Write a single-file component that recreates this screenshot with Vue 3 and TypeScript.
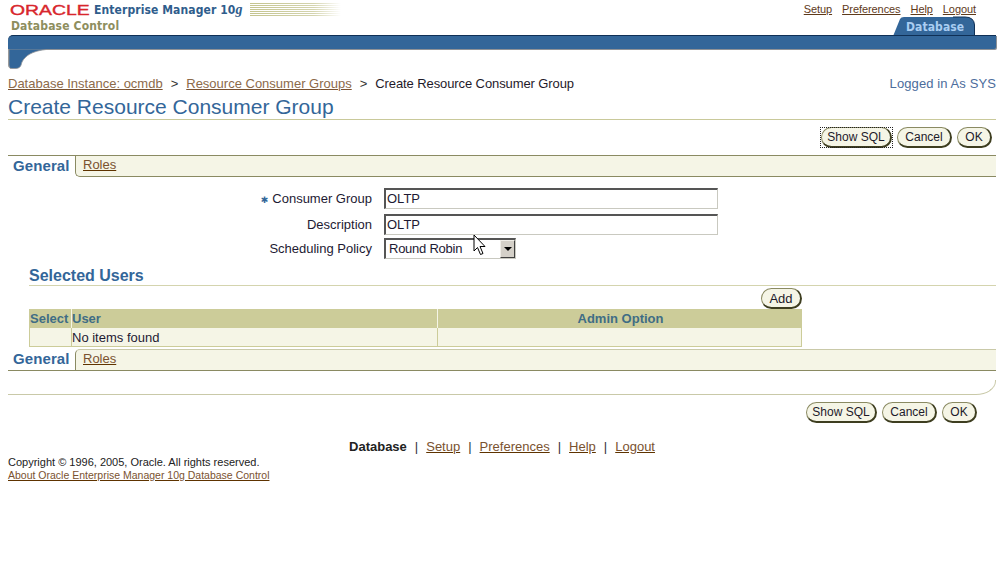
<script setup lang="ts">
const links: string[] = ['Setup', 'Preferences', 'Help', 'Logout']
const stripes: number[] = [0, 2, 4, 6, 8, 10, 12]
</script>

<template>
  <div class="page">
    <header class="top">
      <div class="brand">
        <div class="brand-line">
          <span class="oracle">ORACLE</span>
          <span class="em">Enterprise Manager 10<i>g</i></span>
          <svg class="stripes" width="91" height="14" viewBox="0 0 91 14">
            <defs>
              <linearGradient id="fade" x1="0" x2="1" y1="0" y2="0">
                <stop offset="0" stop-color="#c4c48e" />
                <stop offset="0.7" stop-color="#d4d4ae" />
                <stop offset="1" stop-color="#ffffff" />
              </linearGradient>
            </defs>
            <rect v-for="s in stripes" :key="s" x="0" :y="s" width="91" height="1" fill="url(#fade)" />
          </svg>
        </div>
        <div class="dbc">Database Control</div>
      </div>
      <div class="top-right">
        <nav class="global">
          <a v-for="l in links" :key="l" class="glink">{{ l }}</a>
        </nav>
        <div class="tab">
          <svg class="tab-bg" width="83" height="19" viewBox="0 0 83 19">
            <path d="M0.5 19 L7 3 Q8 1 11 1 L72 1 Q81 1 81.5 9 L81.5 19 Z" fill="#336699" />
            <path d="M81.5 19 L81.5 9 Q81 1 72 1 L60 1" fill="none" stroke="#0f3056" stroke-width="1" />
          </svg>
          <span class="tab-text">Database</span>
        </div>
      </div>
    </header>

    <div class="band"></div>
    <svg class="band-curve" width="60" height="20" viewBox="0 0 60 20">
      <path d="M1 0 H38 V0.5 C24 2 17 7 14 13 C13 16 13 19 8 19.5 L4 19.5 C1.5 19.5 1 18 1 16 Z" fill="#336699" stroke="#8f9296" stroke-width="0.8" />
      <path d="M0.5 0 V16 C0.5 18 2 20 4 20" fill="none" stroke="#9a9a9a" />
    </svg>

    <div class="crumb-row">
      <div class="crumbs">
        <a class="crumb-link">Database Instance: ocmdb</a>
        <span class="sep">&gt;</span>
        <a class="crumb-link">Resource Consumer Groups</a>
        <span class="sep">&gt;</span>
        <span class="crumb-current">Create Resource Consumer Group</span>
      </div>
      <div class="logged">Logged in As SYS</div>
    </div>

    <h1 class="title">Create Resource Consumer Group</h1>

    <div class="actions actions-top">
      <button class="btn b-sql focused">Show SQL</button>
      <button class="btn b-cancel">Cancel</button>
      <button class="btn b-ok">OK</button>
    </div>

    <div class="subtabs first">
      <span class="st-active">General</span>
      <div class="st-rest st-rest-top"><a class="st-link">Roles</a></div>
    </div>

    <form class="form" @submit.prevent>
      <label class="lab"><span class="req">✱</span>Consumer Group</label>
      <div class="field">OLTP</div>
      <label class="lab">Description</label>
      <div class="field">OLTP</div>
      <label class="lab lab-last">Scheduling Policy</label>
      <div class="select">
        <span class="sel-text">Round Robin</span>
        <span class="sel-btn"><span class="arrow"></span></span>
      </div>
      <svg class="cursor" width="14" height="22" viewBox="0 0 14 22">
        <path d="M1 1 V17 L4.5 13.5 L7.5 20.5 L10 19.5 L7 12.5 L12 12.5 Z" fill="#fff" stroke="#000" stroke-width="1" />
      </svg>
    </form>

    <section class="users">
      <h2 class="sec-title">Selected Users</h2>
      <div class="add-row"><button class="btn b-add">Add</button></div>
      <div class="table">
        <div class="th th1">Select</div>
        <div class="th th2">User</div>
        <div class="th th3">Admin Option</div>
        <div class="td td1"></div>
        <div class="td td2">No items found</div>
        <div class="td td3"></div>
      </div>
    </section>

    <div class="subtabs second">
      <span class="st-active">General</span>
      <div class="st-rest st-rest-bottom"><a class="st-link">Roles</a></div>
    </div>

    <div class="closing"></div>

    <div class="actions actions-bottom">
      <button class="btn b-sql">Show SQL</button>
      <button class="btn b-cancel">Cancel</button>
      <button class="btn b-ok">OK</button>
    </div>

    <footer>
      <div class="foot-links">
        <b>Database</b>
        <span class="bar">|</span><a>Setup</a>
        <span class="bar">|</span><a>Preferences</a>
        <span class="bar">|</span><a>Help</a>
        <span class="bar">|</span><a>Logout</a>
      </div>
      <div class="copy">Copyright © 1996, 2005, Oracle. All rights reserved.</div>
      <a class="about">About Oracle Enterprise Manager 10g Database Control</a>
    </footer>
  </div>
</template>

<style>
html, body { margin: 0; background: #fff; }
</style>

<style scoped>
.page {
  width: 988px;
  height: 572px;
  padding: 0 9px 0 8px;
  overflow: hidden;
  position: relative;
  font-family: "Liberation Sans", Arial, sans-serif;
  font-size: 13px;
  color: #1d1a33;
}
a { text-decoration: underline; cursor: pointer; }

.top { display: flex; justify-content: space-between; height: 35px; }
.brand { padding: 2px 0 0 2px; }
.brand-line { display: flex; align-items: center; height: 15px; }
.oracle {
  font-size: 15px;
  font-weight: 400;
  color: #d8262c;
  width: 80px;
  transform: scaleX(1.29);
  transform-origin: left center;
  -webkit-text-stroke: 0.4px #d8262c;
}
.em {
  margin-left: 4px;
  font-family: "DejaVu Sans", sans-serif;
  font-stretch: condensed;
  font-size: 12px;
  font-weight: 700;
  color: #2f5d8c;
  letter-spacing: 0.1px;
  white-space: nowrap;
  width: 150px;
}
.em i { font-family: "Liberation Serif", serif; font-size: 14px; }
.stripes { margin-left: 6px; }
.dbc {
  margin: 2px 0 0 1px;
  font-family: "DejaVu Sans", sans-serif;
  font-stretch: condensed;
  font-size: 12px;
  letter-spacing: 0.15px;
  font-weight: 700;
  color: #8e8e5e;
}
.top-right { display: flex; flex-direction: column; align-items: flex-end; padding-right: 20px; }
.global { display: flex; gap: 10px; height: 17px; padding: 3px 0 0; box-sizing: border-box; font-size: 11px; line-height: 12px; letter-spacing: -0.08px; }
.glink { color: #5e3a1a; }
.tab { position: relative; width: 83px; height: 18px; }
.tab-bg { position: absolute; left: 0; top: -1px; }
.tab-text {
  position: relative;
  display: block;
  padding: 3px 0 0 13px;
  font-family: "DejaVu Sans", sans-serif;
  font-stretch: condensed;
  font-weight: 700;
  font-size: 12px;
  letter-spacing: 0.1px;
  color: #a9cdf2;
}

.band {
  height: 13px;
  background: #336699;
  border-top: 1px solid #0f3056;
  border-radius: 5px 0 2px 0;
  box-shadow: 1px 1px 0 #8f9296;
}
.band-curve { display: block; }

.crumb-row {
  display: flex;
  justify-content: space-between;
  height: 18px;
  margin-top: 6px;
  line-height: 18px;
}
.crumbs { display: flex; gap: 8px; }
.crumb-link { color: #8c6a4a; text-decoration-color: #7a5230; }
.crumb-current { color: #1f1a2a; letter-spacing: -0.1px; }
.sep { color: #333; }
.logged { color: #4c6d9c; letter-spacing: 0.1px; }

.title {
  margin: 3px 0 0;
  font-weight: 400;
  font-size: 21px;
  line-height: 22px;
  color: #336699;
  border-bottom: 1px solid #c9c99a;
  height: 22px;
  padding-bottom: 1px;
}

.actions { display: flex; justify-content: flex-end; gap: 5px; }
.actions-top { margin-top: 7px; padding-right: 4px; }
.btn {
  position: relative;
  height: 21px;
  box-sizing: border-box;
  padding: 0;
  border: 1px solid #8a8a62;
  border-right: 2px solid #3e3e20;
  border-bottom: 2px solid #3e3e20;
  border-radius: 11px;
  background: #f5f5e6;
  font-family: "Liberation Sans", Arial, sans-serif;
  font-size: 12px;
  color: #1d1a2a;
  line-height: 17px;
}
.b-sql { width: 71px; }
.b-cancel { width: 55px; }
.b-ok { width: 35px; }
.b-add { width: 41px; font-size: 13px; }
.focused::after {
  content: "";
  position: absolute;
  inset: -1px -3px -2px -2px;
  border: 1px dotted #222;
}

.subtabs { display: flex; }
.first { margin-top: 7px; }
.st-active {
  width: 67px;
  box-sizing: border-box;
  padding-left: 5px;
  font-size: 15px;
  letter-spacing: 0.1px;
  font-weight: 700;
  color: #336699;
  border-top: 1px solid #8a8a62;
  line-height: 20px;
}
.st-rest { flex: 1; background: #f5f5e6; padding-left: 7px; box-sizing: border-box; height: 22px; line-height: 18px; }
.st-rest-top { border-top: 1px solid #8a8a62; border-bottom: 1px solid #8a8a62; border-left: 1px solid #8a8a62; border-bottom-left-radius: 5px; }
.st-rest-bottom { border-top: 1px solid #c9c9a8; border-bottom: 1px solid #8a8a62; border-left: 1px solid #8a8a62; border-top-left-radius: 5px; }
.st-link { color: #7a5230; text-decoration-color: #5e3300; }
.second .st-active { border-top: none; border-bottom: 1px solid #8a8a62; }

.form {
  position: relative;
  display: grid;
  grid-template-columns: 364px 334px;
  grid-template-rows: 21px 21px 21px;
  column-gap: 12px;
  row-gap: 5px;
  margin-top: 11px;
  align-items: center;
}
.lab-last { margin-top: -5px; }
.lab { text-align: right; }
.req { color: #336699; font-size: 9px; margin-right: 4px; font-family: "DejaVu Sans", sans-serif; }
.field {
  height: 21px;
  box-sizing: border-box;
  border: 2px solid #c9c9c0;
  border-top-color: #555;
  border-left-color: #555;
  border-right-width: 1px;
  border-bottom-width: 1px;
  padding-left: 1px;
  line-height: 18px;
  background: #fff;
}
.select {
  display: flex;
  justify-content: space-between;
  width: 132px;
  height: 21px;
  box-sizing: border-box;
  border: 2px solid #555;
  border-right: 1px solid #c9c9c0;
  border-bottom: 1px solid #c9c9c0;
  margin-top: -5px;
  line-height: 18px;
}
.sel-text { padding-left: 3px; letter-spacing: -0.25px; }
.sel-btn {
  width: 15px;
  display: flex;
  align-items: center;
  justify-content: center;
  box-sizing: border-box;
  background: #d4d0c8;
  border: 1px solid;
  border-color: #f0eee8 #404040 #404040 #f0eee8;
}
.arrow {
  width: 0;
  height: 0;
  border-left: 4px solid transparent;
  border-right: 4px solid transparent;
  border-top: 4px solid #000;
}
.cursor { position: absolute; left: 465px; top: 46px; }

.users { padding-left: 21px; margin-top: 5px; }
.sec-title {
  margin: 0;
  font-size: 16px;
  line-height: 19px;
  font-weight: 700;
  color: #336699;
  border-bottom: 1px solid #d4d4ae;
  height: 20px;
  box-sizing: border-box;
}
.add-row { width: 773px; height: 21px; display: flex; justify-content: flex-end; margin-top: 2px; }
.table {
  width: 773px;
  display: grid;
  grid-template-columns: 42px 366px 365px;
  grid-template-rows: 19px 19px;
  line-height: 19px;
}
.th { background: #cccc99; font-weight: 700; color: #3f6d85; padding-left: 1px; box-sizing: border-box; }
.th2 { border-left: 1px solid #f5f5e6; padding-left: 0; }
.th3 { border-left: 1px solid #f5f5e6; text-align: center; }
.td { background: #f5f5e6; border-bottom: 1px solid #cccc99; box-sizing: border-box; }
.td1 { border-left: 1px solid #cccc99; }
.td2 { border-left: 1px solid #cccc99; }
.td3 { border-left: 1px solid #cccc99; border-right: 1px solid #cccc99; }

.second { margin-top: 2px; }
.closing {
  height: 15px;
  margin-top: 9px;
  box-sizing: border-box;
  border-bottom: 1px solid #c9c9a8;
  border-right: 1px solid #c9c9a8;
  border-bottom-right-radius: 20px 14px;
}
.actions-bottom { margin-top: 7px; padding-right: 19px; }

footer { margin-top: 15px; }
.foot-links { display: flex; justify-content: center; gap: 8px; line-height: 18px; }
.foot-links a { color: #7a5230; text-decoration-color: #5e3300; }
.foot-links b { font-weight: 700; color: #222; }
.bar { color: #333; }
.copy { font-size: 11px; line-height: 13px; margin-top: 0; color: #222; }
.about { display: block; font-size: 10.5px; line-height: 13px; color: #7a5230; text-decoration-color: #5e3300; }
</style>
